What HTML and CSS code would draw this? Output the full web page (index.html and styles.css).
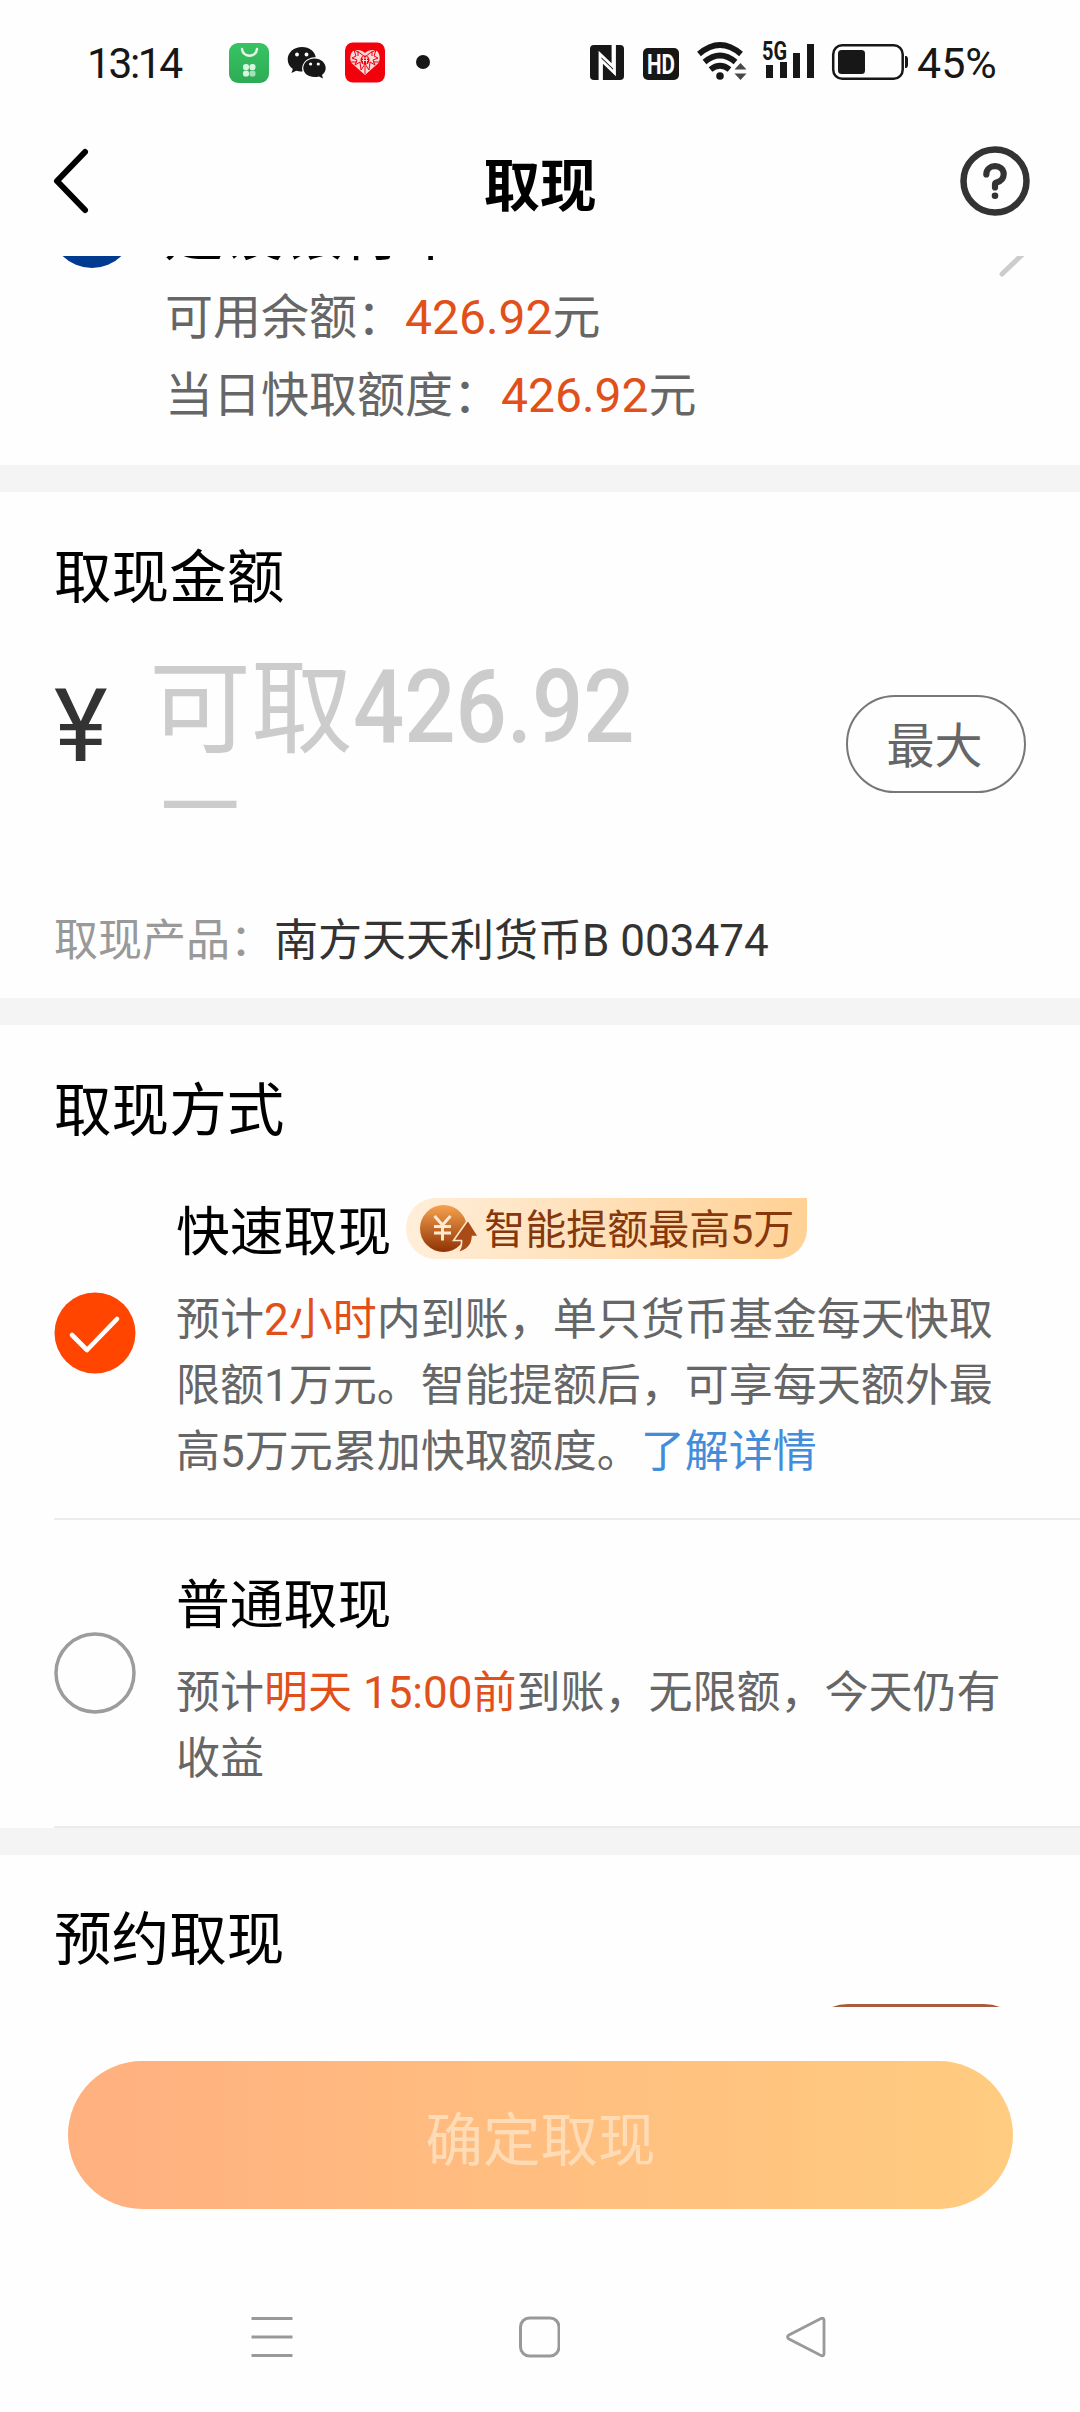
FILE: index.html
```html
<!DOCTYPE html>
<html lang="zh-CN">
<head>
<meta charset="utf-8">
<title>取现</title>
<link rel="stylesheet" href="styles.css">
</head>
<body>
<div class="screen">
  <div class="status">
    <span class="clock">13:14</span>
    <svg class="status-icons" width="520" height="110" viewBox="181 0 520 110">
      <defs>
        <linearGradient id="green" x1="0" y1="0" x2="0" y2="1"><stop offset="0" stop-color="#38c463"/><stop offset="1" stop-color="#2eab55"/></linearGradient>
      </defs>
      <rect x="229" y="43" width="40" height="40" rx="9" fill="url(#green)"/>
      <path d="M242 49c1 9 14 9 15 0" fill="none" stroke="#e4f8e9" stroke-width="2.4" stroke-linecap="round"/>
      <g fill="#d9f5e0"><rect x="243" y="64" width="6" height="6" rx="2.6"/><rect x="249.500" y="64" width="6" height="6" rx="2.600"/><rect x="243" y="70.500" width="6" height="6" rx="2.600"/><rect x="249.500" y="70.500" width="6" height="6" rx="2.600" opacity=".7"/></g>
      <path d="M302 47c7.500 0 13 4.600 13.700 10.200-8.500-.5-15.200 6.300-13.200 14.300-2.200.2-4.300 0-6.300-.7l-4.700 2.300 1.300-4.200c-3.300-2.400-5.100-5.500-5.100-9.600C287.700 52.500 294 47 302 47Z" fill="#171717"/>
      <path d="M314.500 58.500c6.400 0 11.200 4.400 11.200 9.600 0 2.900-1.400 5.300-3.700 7l1 3.300-4-2c-7.900 2.500-15.700-1.800-15.700-8.300 0-5.200 4.800-9.600 11.200-9.600Z" fill="#171717"/>
      <g fill="#fff"><circle cx="297" cy="54.500" r="1.900"/><circle cx="306.500" cy="54.500" r="1.900"/><circle cx="310.600" cy="64" r="1.600"/><circle cx="318.300" cy="64" r="1.600"/></g>
      <rect x="345" y="42.500" width="40" height="40" rx="8" fill="#f2000c"/>
      <path d="M365 75 351.500 63c-2-4-1.500-9 1.500-12 4-2 9-1 12 2 3-3 8-4 12-2 3 3 3.500 8 1.500 12Z" fill="#fbd8d8"/>
      <g stroke="#f2000c" stroke-width="1" fill="none"><path d="m354 50 2 6-4 2 5 2-2 5 5-3 1 8 4-6 4 6 1-8 5 3-2-5 5-2-4-2 2-6-6 3-5 4-5-4Z"/><path d="M351 62h6m16 0h6M358 51v5m14-5v5M365 66v8"/></g>
      <circle cx="365" cy="60" r="4.500" fill="#f2000c"/><path d="M362 58h6m-6 2.500h6m-4.500-4v7m3-7v7" stroke="#ffd7d7"/>
      <circle cx="423" cy="62" r="7" fill="#171717"/>
      <rect x="590" y="45" width="34" height="35" rx="4" fill="#171717"/>
      <path d="M600 80V54l13 12.500V45M614.500 45v28L601.500 60.500V80" fill="none" stroke="#fff" stroke-width="2.800"/>
      <rect x="643" y="48" width="36" height="32" rx="5" fill="#171717"/>
      <text class="hd" x="661" y="73.500" text-anchor="middle" textLength="28" lengthAdjust="spacingAndGlyphs">HD</text>
    </svg>
    <svg width="220" height="110" viewBox="691 0 220 110">
      <g fill="none" stroke="#171717" stroke-width="5.800"><path d="M699 54q21-18 42 0M704.500 62q15.500-13 31 0M710.500 69.500q9.500-7.500 19 0"/></g>
      <circle cx="720" cy="76" r="3.800" fill="#171717"/><path d="m740.500 63 6 6.500h-12ZM740.500 80l6-6.500h-12Z" fill="#484848"/>
      <text class="net" x="762" y="59.500" textLength="25" lengthAdjust="spacingAndGlyphs">5G</text>
      <path d="M766 65h7v13h-7ZM780 62h7v16h-7ZM793 53h7v25h-7ZM807 44h7v34h-7Z" fill="#171717"/>
      <rect x="833.200" y="45.200" width="69.500" height="33.500" rx="9" fill="none" stroke="#171717" stroke-width="2.500"/>
      <rect x="838" y="50" width="27" height="24" rx="3.500" fill="#171717"/><path d="M905 56h1.500q1.500 1 1.500 3v6q0 2-1.500 3H905Z" fill="#171717"/>
    </svg>
    <span class="battery">45%</span>
  </div>

  <header class="nav">
    <svg width="48" height="70" viewBox="0 0 48 70"><path d="M34 6 6 35l28 29" fill="none" stroke="#000" stroke-width="6" stroke-linecap="round" stroke-linejoin="round"/></svg>
    <h1 class="nav-title">取现</h1>
    <svg width="70" height="70" viewBox="0 0 70 70"><circle cx="35" cy="35" r="31.500" fill="none" stroke="#333" stroke-width="6.500"/><path d="M26.300 28.500c0-11 17.400-11 17.400-.5 0 6-4 7.500-7.200 8.500-1.300.4-1.500 1-1.500 2v3" fill="none" stroke="#333" stroke-width="6.200" stroke-linecap="round"/><circle cx="35" cy="49.800" r="3.300" fill="#333"/></svg>
  </header>

  <main class="scroller">
    <section class="card account">
      <div class="bank">
        <span class="bank-logo"></span>
        <span class="bank-name">建设银行卡</span>
        <svg class="chevron" width="30" height="50" viewBox="0 0 30 50"><path d="m3 3 23 22L3 47" fill="none" stroke="#ccc" stroke-width="5" stroke-linecap="round"/></svg>
      </div>
      <div class="balance">可用余额：<em>426.92</em>元</div>
      <div class="balance">当日快取额度：<em>426.92</em>元</div>
    </section>

    <section class="card amount">
      <h2 class="heading">取现金额</h2>
      <div class="entry">
        <span class="yen">¥</span>
        <div class="placeholder"><div class="ph-line">可取<span class="ph-number">426.92</span></div><div class="ph-line ph-wrap">元</div></div>
        <button class="max">最大</button>
      </div>
      <div class="product"><span class="product-label">取现产品：</span>南方天天利货币B 003474</div>
    </section>

    <section class="card methods">
      <h2 class="heading">取现方式</h2>
      <div class="method fast">
        <svg class="radio" viewBox="0 0 82 82"><circle cx="41" cy="41" r="40.500" fill="#ff4500"/><path d="m18 43 15 15 30-31" fill="none" stroke="#fff" stroke-width="4.600" stroke-linecap="round" stroke-linejoin="round"/></svg>
        <div class="method-body">
          <div class="method-head"><span class="method-title">快速取现</span>
            <span class="tag">
              <svg width="60" height="54" viewBox="0 0 60 54"><defs><linearGradient id="coin" x1="0" y1="0" x2="0" y2="1"><stop offset="0" stop-color="#f6a34f"/><stop offset="1" stop-color="#8f3204"/></linearGradient></defs><circle cx="24.500" cy="26.500" r="23.500" fill="url(#coin)"/><path d="m49 18 10.500 16.500h-6c0 8-6 14-15 16.500 3-4 4.500-8 4-12.500h-8Z" fill="#a94b17" stroke="#ffe7cb" stroke-width="1.600"/><path d="m15.500 14 8 9 8-9M15 24.500h17M15 31h17M23.500 23v15.500" fill="none" stroke="#ffe9d0" stroke-width="3"/></svg>
              <span class="tag-text">智能提额最高5万</span>
            </span>
          </div>
          <p class="desc">预计<em>2小时</em>内到账，单只货币基金每天快取限额1万元。智能提额后，可享每天额外最高5万元累加快取额度。<a class="link">了解详情</a></p>
        </div>
      </div>
      <div class="method normal">
        <svg class="radio" viewBox="0 0 82 82"><circle cx="41" cy="41" r="39" fill="none" stroke="#9c9c9c" stroke-width="3.500"/></svg>
        <div class="method-body">
          <div class="method-head"><span class="method-title">普通取现</span></div>
          <p class="desc">预计<em>明天 15:00前</em>到账，无限额，今天仍有收益</p>
        </div>
      </div>
    </section>

    <section class="card booking">
      <h2 class="heading">预约取现</h2>
      <div class="booking-action"></div>
    </section>
  </main>

  <footer class="footer"><button class="submit">确定取现</button></footer>
  <div class="system">
    <svg width="42" height="44" viewBox="0 0 42 44"><path d="M.5 3.500h41M.5 22h41M.5 40.500h41" stroke="#999" stroke-width="3.200"/></svg>
    <svg width="42" height="44" viewBox="0 0 42 44"><rect x="2.500" y="3" width="38.500" height="38" rx="9" fill="none" stroke="#999" stroke-width="3"/></svg>
    <svg width="42" height="44" viewBox="0 0 42 44"><path d="M36 3.500 4 20q-3 2 0 4l32 16.500q3 1 3-2v-33q0-3-3-2Z" fill="none" stroke="#999" stroke-width="2.800"/></svg>
  </div>
</div>
</body>
</html>
```
FILE: styles.css
```css
* { box-sizing: border-box; }
body, h1, h2, p { margin: 0; }
body { background: #fefefe; font-family: Roboto, "Noto Sans CJK SC", sans-serif; color: #000; }
button { font-family: inherit; padding: 0; border: 0; }
em { font-style: normal; color: #e2501a; }
svg { display: block; flex: none; }
.screen { width: 1080px; height: 2412px; display: flex; flex-direction: column; overflow: hidden; }

.status { height: 110px; display: flex; align-items: center; padding-left: 87px; color: #171717; flex: none; }
.clock { width: 94px; font-size: 42.5px; letter-spacing: -2.4px; white-space: nowrap; padding-top: 16px; }
.status-icons { margin-right: -10px; }
.battery { font-size: 43px; letter-spacing: 0; margin-left: 6px; padding-top: 16px; }
.hd { font: 700 27px Roboto, sans-serif; fill: #fff; }
.net { font: 700 25px Roboto, sans-serif; fill: #171717; }

.nav { height: 146px; flex: none; display: flex; align-items: flex-start; justify-content: space-between; padding: 36px 50px 0 51px; }
.nav-title { font-size: 56.5px; font-weight: 700; line-height: 80px; padding-left: 21px; margin-top: 1px; }

.scroller { height: 1751px; flex: none; overflow: hidden; background: #f4f4f4; display: flex; flex-direction: column; gap: 27px; }
.card { background: #fefefe; flex: none; }
.heading { font-size: 57.6px; font-weight: 400; line-height: 82px; height: 80px; }

.account { height: 209px; }
.bank { height: 80px; margin-top: -57px; padding-left: 50px; display: flex; align-items: flex-start; }
.bank-logo { width: 84px; height: 84px; border-radius: 50%; background: #003b8f; margin-top: -15px; }
.bank-name { font-size: 59.5px; line-height: 80px; margin-left: 30px; margin-top: -4px; }
.chevron { margin-left: auto; margin-right: 51px; margin-top: 28px; }
.balance { padding-left: 165px; font-size: 48px; line-height: 78px; color: #666; }

.amount { height: 506px; padding: 46px 54px 0; }
.entry { height: 214px; margin-top: 10px; display: flex; align-items: flex-start; }
.yen { width: 95px; font-size: 102px; line-height: 120px; color: #333; padding-top: 38px; }
.placeholder { width: 560px; height: 171px; margin-top: 14px; overflow: hidden; color: #ccc; font-size: 102px; }
.ph-line { height: 134px; line-height: 136px; white-space: nowrap; }
.ph-wrap { padding-left: 1px; margin-left: -1px; }
.ph-number { display: inline-block; font-weight: 500; transform: translateY(-3px) scaleX(.885); transform-origin: 0 50%; }
.max { width: 180px; height: 98px; margin: 67px 0 0 auto; border: 2px solid #777; border-radius: 49px; background: none; color: #666; font-size: 48px; padding: 0 3px 4px 0; }
.product { font-size: 44px; line-height: 60px; margin-top: 69px; color: #333; }
.product-label { color: #999; }

.methods { height: 803px; padding: 46px 0 0 54px; }
.method { display: flex; align-items: flex-start; border-bottom: 2px solid #ececec; }
.radio { width: 82px; height: 82px; }
.method-body { width: 830px; margin-left: 40px; }
.method-head { height: 64px; display: flex; align-items: center; }
.method-title { font-size: 53.8px; line-height: 64px; }
.desc { font-size: 44px; line-height: 66px; color: #666; }
.fast { height: 369px; padding-top: 50px; }
.fast .radio { margin-top: 91px; }
.fast .desc { margin-top: 22px; }
.normal { height: 308px; padding-top: 54px; }
.normal .radio { margin-top: 58px; }
.normal .desc { margin-top: 22px; }
.link { color: #438cda; }
.tag { width: 401px; height: 61px; margin-left: 15px; margin-top: -9px; border-radius: 30px 0 30px 30px; background: linear-gradient(90deg, #ffeed9, #ffd195); display: flex; align-items: center; padding-left: 13px; }
.tag-text { font-size: 41px; line-height: 60px; color: #86370c; margin-left: 5px; padding-top: 2px; white-space: nowrap; }

.booking { height: 300px; padding: 45px 54px 0; }
.booking-action { width: 220px; height: 84px; margin: 24px 0 0 auto; border: 3px solid #a85b3d; border-radius: 42px; }

.footer { height: 202px; flex: none; padding: 54px 67px 0 68px; }
.submit { display: block; width: 945px; height: 148px; border-radius: 74px; background: linear-gradient(90deg, #ffb07f, #ffcc80); color: #ffdcb6; font-size: 57.5px; padding-top: 2px; }
.system { height: 203px; display: flex; justify-content: space-between; padding: 106px 253px 0 251px; }
```
